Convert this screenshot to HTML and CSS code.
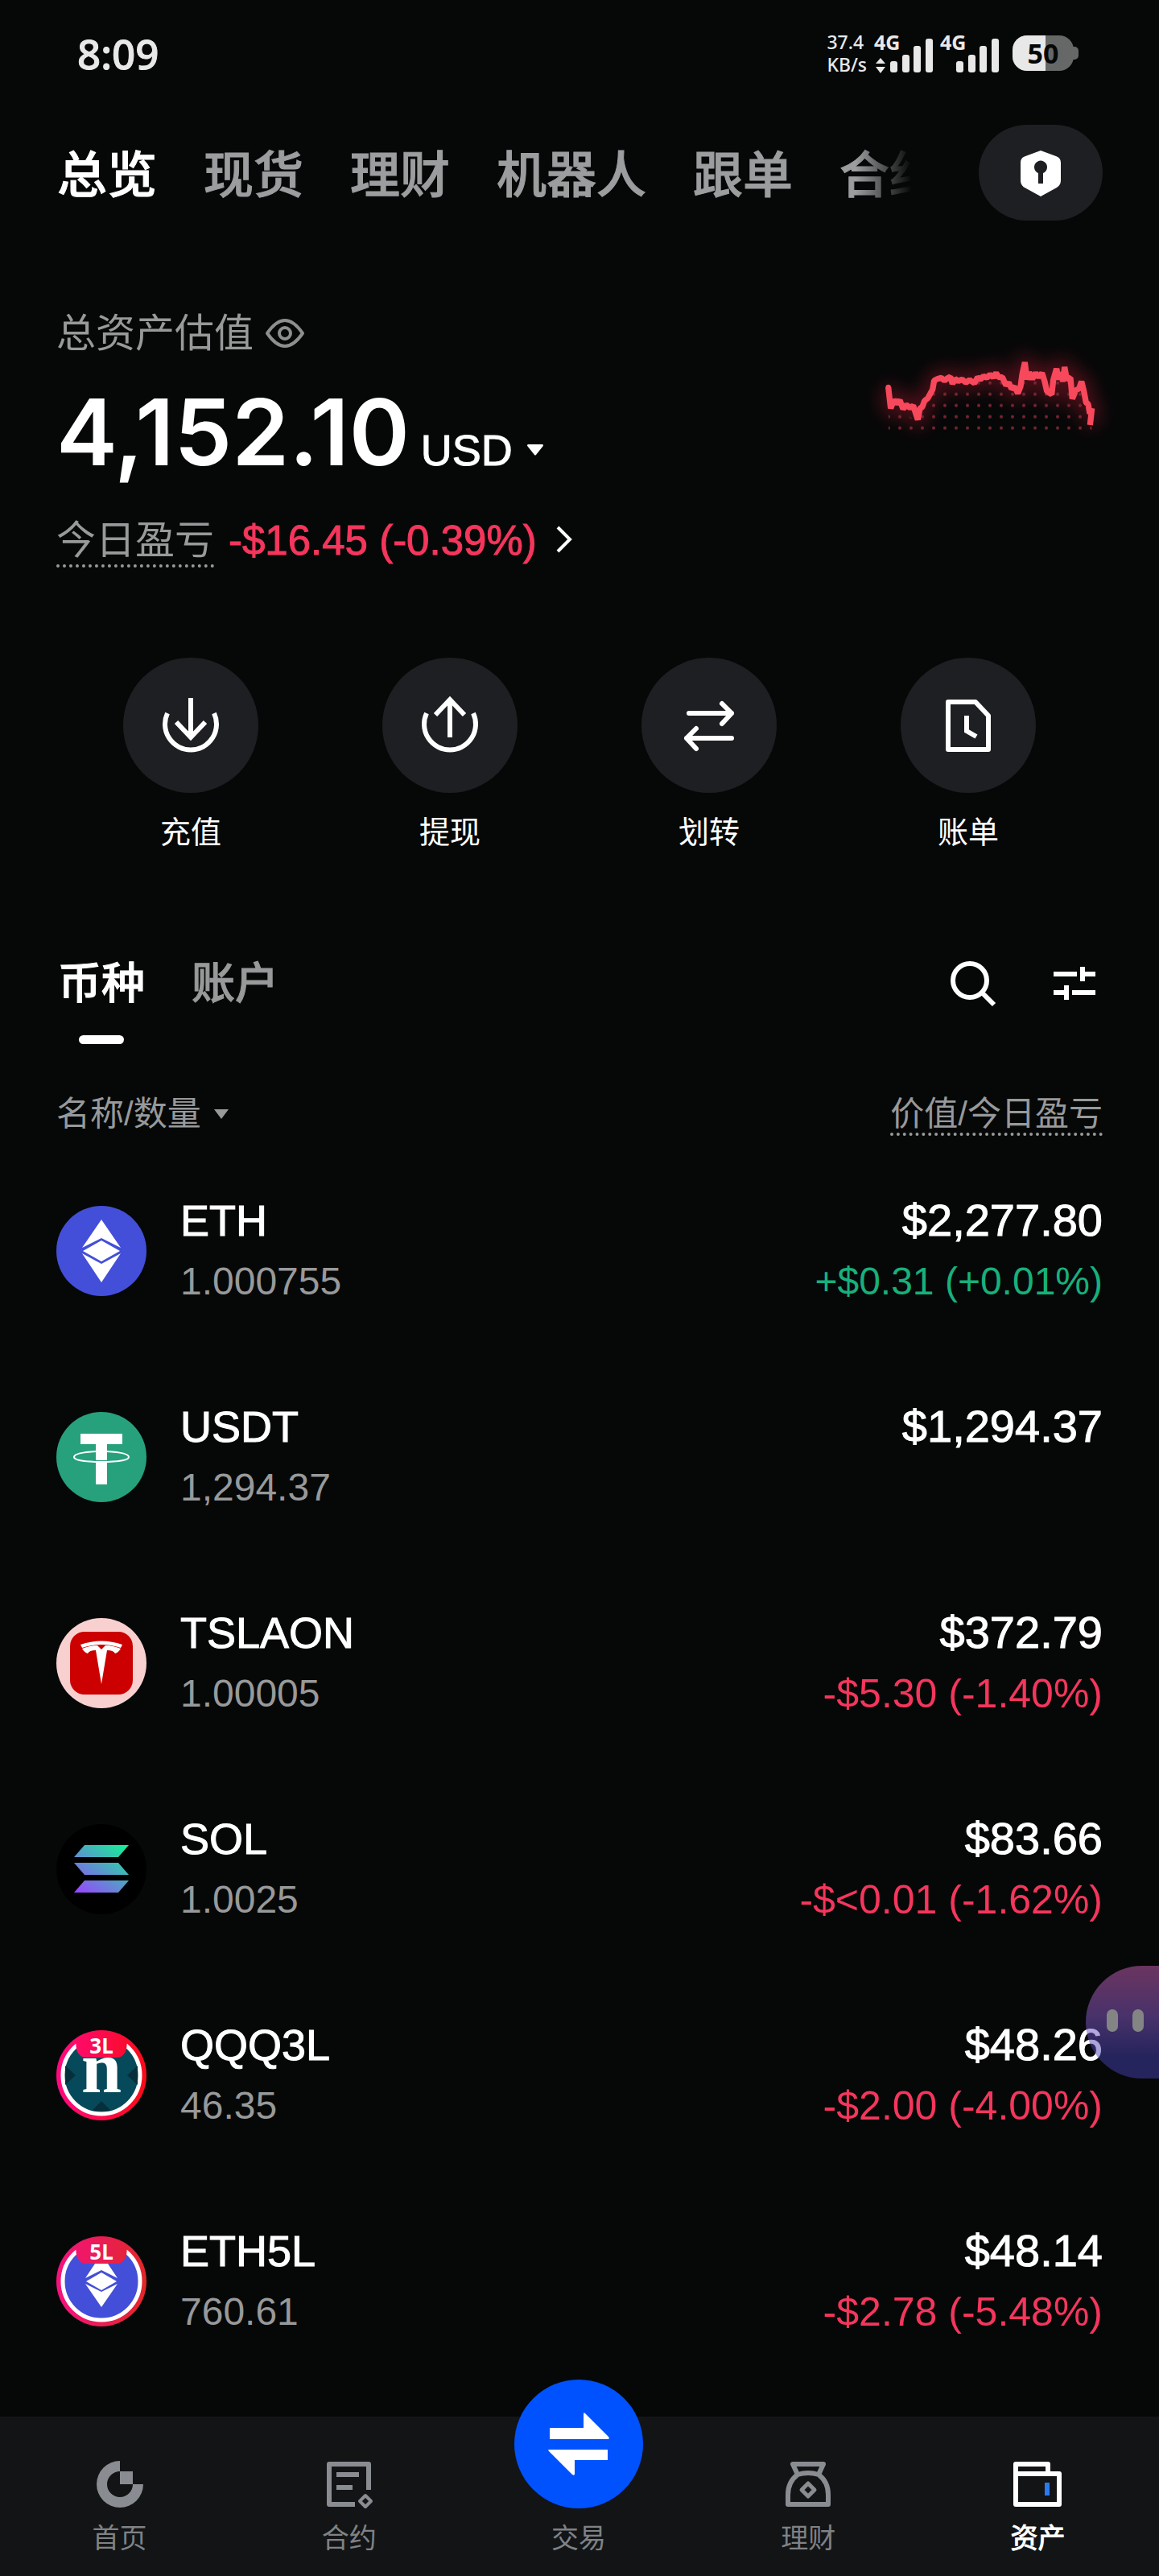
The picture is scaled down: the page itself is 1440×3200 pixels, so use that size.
FILE: index.html
```
<!DOCTYPE html>
<html lang="zh-CN">
<head>
    <meta charset="utf-8">
    <meta name="viewport" content="width=device-width, initial-scale=1">
    <title>资产总览</title>
    <link rel="stylesheet" href="styles.css">
</head>
<body>
    <div class="status">
        <span class="clock">8:09</span>
        <div class="status-right">
            <div class="speed"><span>37.4</span><span>KB/s</span></div>
            <svg class="signals" width="156" height="50" viewBox="0 0 156 50">
                <g fill="#e8e8e8">
                    <text x="0" y="21" class="net">4G</text>
                    <path d="M2 38L8 31L14 38zM2 42L8 50L14 42z"/>
                    <rect x="20" y="35" width="9" height="14" rx="3"/>
                    <rect x="35" y="27" width="9" height="22" rx="3"/>
                    <rect x="49" y="16" width="9" height="33" rx="3"/>
                    <rect x="64" y="7" width="9" height="42" rx="3"/>
                    <text x="82" y="21" class="net">4G</text>
                    <rect x="102" y="35" width="9" height="14" rx="3"/>
                    <rect x="117" y="27" width="9" height="22" rx="3"/>
                    <rect x="131" y="16" width="9" height="33" rx="3"/>
                    <rect x="146" y="7" width="9" height="42" rx="3"/>
                </g>
            </svg>
            <svg class="battery" width="82" height="44" viewBox="0 0 82 44">
                <path d="M74 14h3a5 5 0 0 1 5 5v6a5 5 0 0 1-5 5h-3z" fill="#666867"/>
                <rect width="76" height="44" rx="18" fill="#666867"/>
                <path d="M41 0H18A18 18 0 0 0 0 18v8a18 18 0 0 0 18 18h23z" fill="#e8e8e8"/>
                <text x="38" y="35" text-anchor="middle" class="level">50</text>
            </svg>
        </div>
    </div>

    <header class="top">
        <nav class="top-tabs">
            <a href="#" class="active">总览</a>
            <a href="#">现货</a>
            <a href="#">理财</a>
            <a href="#">机器人</a>
            <a href="#">跟单</a>
            <a href="#">合约</a>
        </nav>
        <button class="shield" aria-label="安全中心">
            <svg width="50" height="58" viewBox="0 0 50 58">
                <path d="M25 1L44 8Q50 10 50 16V38Q50 44 45 47L25 58L5 47Q0 44 0 38V16Q0 10 6 8z" fill="#fff"/>
                <path d="M22 42V29a8 8 0 1 1 6 0V42z" fill="#1e1f22"/>
            </svg>
        </button>
    </header>

    <main>
        <section class="summary">
            <div>
                <div class="label">总资产估值
                    <button aria-label="隐藏金额">
                        <svg width="48" height="36" viewBox="0 0 48 36" fill="none" stroke="#8d8e8f" stroke-width="4">
                            <path d="M2 18Q24-14 46 18Q24 50 2 18z" stroke-linejoin="round"/>
                            <circle cx="24" cy="18" r="7"/>
                        </svg>
                    </button>
                </div>
                <div class="total">
                    <strong>4,152.10</strong>
                    <button class="currency">USD
                        <svg width="20" height="14" viewBox="0 0 20 14"><path d="M1 0h18q2 1 0 3L11 13q-1 1-2 0L1 3q-2-2 0-3z" fill="#fff"/></svg>
                    </button>
                </div>
                <a href="#" class="today">
                    <span class="dotted">今日盈亏</span>
                    <span class="down">-$16.45 (-0.39%)</span>
                    <svg width="20" height="34" viewBox="0 0 20 34" fill="none" stroke="#fff" stroke-width="4"><path d="M2 2L17 17L2 32"/></svg>
                </a>
            </div>
            <svg class="trend" width="260" height="100" viewBox="180 120 780 300">
                <defs>
                    <pattern id="dots" x="171" y="206" width="42" height="42" patternUnits="userSpaceOnUse">
                        <circle cx="21" cy="21" r="6" fill="#7a2433"/>
                    </pattern>
                    <filter id="glow" x="-30%" y="-80%" width="160%" height="260%"><feGaussianBlur stdDeviation="34"/></filter>
                    <path id="line" d="M191 243L200 322L212 290L222 304L234 292L246 324L258 308L272 320L284 312L301 364L309 322L318 316L326 294L338 284L348 266L356 252L362 218L374 212L388 208L400 218L411 210L422 204L430 230L440 212L452 220L466 214L480 226L494 216L512 228L524 206L534 214L546 202L558 208L570 196L582 206L593 190L602 206L616 206L630 236L640 226L650 248L662 242L674 266L684 240L690 196L700 150L708 214L716 188L728 212L740 190L752 206L764 190L774 222L782 258L800 270L806 216L818 174L826 214L834 188L842 222L848 168L856 212L870 208L877 286L890 254L902 248L911 222L920 258L928 300L936 306L942 342L950 322L943 384"/>
                    <clipPath id="under"><path d="M191 300L300 372L362 250L440 236L600 212L674 272L700 212L764 212L798 280L818 222L866 212L878 286L911 244L950 380V410H191z"/></clipPath>
                </defs>
                <use href="#line" fill="none" stroke="#f5233f" stroke-width="60" stroke-linejoin="round" opacity=".3" filter="url(#glow)"/>
                <rect x="180" y="200" width="780" height="220" fill="url(#dots)" clip-path="url(#under)"/>
                <use href="#line" fill="none" stroke="#f7485c" stroke-width="22" stroke-linejoin="bevel"/>
                <circle cx="191" cy="243" r="10" fill="#f7485c"/>
            </svg>
        </section>

        <section class="actions">
            <button>
                <span class="disc"><svg width="84" height="84" viewBox="0 0 84 84"><path d="M42 8V54M24 38L42 57L60 38M13 27A32 32 0 1 0 71 27"/></svg></span>
                充值
            </button>
            <button>
                <span class="disc"><svg width="84" height="84" viewBox="0 0 84 84"><path d="M42 57V12M24 29L42 10L60 29M13 27A32 32 0 1 0 71 27"/></svg></span>
                提现
            </button>
            <button>
                <span class="disc"><svg width="84" height="84" viewBox="0 0 84 84" stroke-linecap="round" stroke-linejoin="round"><path d="M17 27H70M58 15L70 27L58 40M70 58H14M26 46L14 58L26 71"/></svg></span>
                划转
            </button>
            <button>
                <span class="disc"><svg width="84" height="84" viewBox="0 0 84 84" stroke-linejoin="round"><path d="M17 13H51L67 30V72H17z"/><path d="M40 30V49L52 56" stroke-linejoin="miter"/></svg></span>
                账单
            </button>
        </section>

        <div class="list-bar">
            <nav class="list-tabs">
                <a href="#" class="active">币种</a>
                <a href="#">账户</a>
            </nav>
            <div class="tools">
                <button aria-label="搜索"><svg width="56" height="60" viewBox="0 0 56 60"><circle cx="24" cy="28" r="21"/><path d="M39 43L54 58"/></svg></button>
                <button aria-label="筛选"><svg width="52" height="60" viewBox="0 0 52 60"><path d="M0 20H29M36 11V29M36 20H52M0 43H16M16 34V52M23 43H52"/></svg></button>
            </div>
        </div>

        <table class="assets">
            <thead>
                <tr>
                    <th colspan="2"><button>名称/数量
                        <svg width="18" height="12" viewBox="0 0 18 12"><path d="M0 0H18L9 12z" fill="#98999a"/></svg>
                    </button></th>
                    <th class="right"><span class="dotted">价值/今日盈亏</span></th>
                </tr>
            </thead>
            <tbody>
                <tr>
                    <td class="coin">
                        <svg width="112" height="112" viewBox="0 0 112 112">
                            <circle cx="56" cy="56" r="56" fill="#434fd8"/>
                            <path d="M56 17L80 52L56 40L32 52zM56 43L79 56L56 69L33 56zM32 59L56 72L80 59L56 95z" fill="#fff"/>
                        </svg>
                    </td>
                    <td><b>ETH</b><span>1.000755</span></td>
                    <td class="right"><b>$2,277.80</b><span class="up">+$0.31 (+0.01%)</span></td>
                </tr>
                <tr>
                    <td class="coin">
                        <svg width="112" height="112" viewBox="0 0 112 112">
                            <circle cx="56" cy="56" r="56" fill="#26a17b"/>
                            <path d="M30 27H82V40H63V60H49V40H30zM49 63H63V90H49z" fill="#fff"/>
                            <path d="M49 49C32 50 22 52 22 56S36 62 56 62S90 60 90 56S80 50 63 49" fill="none" stroke="#fff" stroke-width="2"/>
                        </svg>
                    </td>
                    <td><b>USDT</b><span>1,294.37</span></td>
                    <td class="right"><b>$1,294.37</b><span>&nbsp;</span></td>
                </tr>
                <tr>
                    <td class="coin">
                        <svg width="112" height="112" viewBox="0 0 112 112">
                            <circle cx="56" cy="56" r="56" fill="#f9d0d0"/>
                            <rect x="17" y="17" width="78" height="78" rx="18" fill="#cc0000"/>
                            <path d="M30 33Q56 24 82 33L80 37Q56 29 32 37z" fill="#fff"/>
                            <path d="M32 38Q42 34 51 34L56 39L61 34Q70 34 80 38Q77 43 73 44Q71 40 63 40L56 82L49 40Q41 40 39 44Q35 43 32 38z" fill="#fff"/>
                        </svg>
                    </td>
                    <td><b>TSLAON</b><span>1.00005</span></td>
                    <td class="right"><b>$372.79</b><span class="down">-$5.30 (-1.40%)</span></td>
                </tr>
                <tr>
                    <td class="coin">
                        <svg width="112" height="112" viewBox="0 0 112 112">
                            <linearGradient id="sol" gradientUnits="userSpaceOnUse" x1="32" y1="90" x2="80" y2="22"><stop stop-color="#9945ff"/><stop offset="1" stop-color="#14f195"/></linearGradient>
                            <circle cx="56" cy="56" r="56" fill="#000"/>
                            <path d="M35 26H90L77 41H22zM22 48H77L90 63H35zM35 70H90L77 85H22z" fill="url(#sol)"/>
                        </svg>
                    </td>
                    <td><b>SOL</b><span>1.0025</span></td>
                    <td class="right"><b>$83.66</b><span class="down">-$&lt;0.01 (-1.62%)</span></td>
                </tr>
                <tr>
                    <td class="coin">
                        <svg width="112" height="112" viewBox="0 0 112 112">
                            <linearGradient id="ring" gradientUnits="userSpaceOnUse" x1="0" x2="112"><stop stop-color="#ff0a80"/><stop offset="1" stop-color="#f80c18"/></linearGradient>
                            <circle cx="56" cy="56" r="56" fill="url(#ring)"/>
                            <circle cx="56" cy="56" r="48" fill="#06495a" stroke="#fff" stroke-width="5"/>
                            <path d="M11 44L24 56L11 68zM101 44L88 56L101 68zM44 100L56 88L68 100z" fill="#062f3b"/>
                            <text x="56" y="77" text-anchor="middle" class="mark">n</text>
                            <path d="M24 14L40 3H72L88 14L87 24Q84 34 74 34H38Q28 34 25 24z" fill="url(#ring)"/>
                            <text x="56" y="29" text-anchor="middle" class="lever">3L</text>
                        </svg>
                    </td>
                    <td><b>QQQ3L</b><span>46.35</span></td>
                    <td class="right"><b>$48.26</b><span class="down">-$2.00 (-4.00%)</span></td>
                </tr>
                <tr>
                    <td class="coin">
                        <svg width="112" height="112" viewBox="0 0 112 112">
                            <linearGradient id="ring5" gradientUnits="userSpaceOnUse" x1="0" x2="112"><stop stop-color="#f5127f"/><stop offset="1" stop-color="#e02828"/></linearGradient>
                            <circle cx="56" cy="56" r="56" fill="url(#ring5)"/>
                            <circle cx="56" cy="56" r="48" fill="#434fd8" stroke="#fff" stroke-width="5"/>
                            <path d="M56 22L76 52L56 42L36 52zM56 45L75 56L56 67L37 56zM36 59L56 69L76 59L56 88z" fill="#fff"/>
                            <path d="M24 14L40 3H72L88 14L87 24Q84 34 74 34H38Q28 34 25 24z" fill="url(#ring5)"/>
                            <text x="56" y="29" text-anchor="middle" class="lever">5L</text>
                        </svg>
                    </td>
                    <td><b>ETH5L</b><span>760.61</span></td>
                    <td class="right"><b>$48.14</b><span class="down">-$2.78 (-5.48%)</span></td>
                </tr>
            </tbody>
        </table>
    </main>

    <!-- floating assistant, half tucked behind the right edge -->
    <button class="assistant" aria-label="助手"><i></i><i></i></button>

    <nav class="bottom">
        <a href="#">
            <svg width="60" height="60" viewBox="0 0 60 60"><path d="M30 1V14A16 16 0 1 0 46 30H59A29 29 0 1 1 30 1zM30 14H46V30H30z" fill="#898c90"/></svg>
            首页
        </a>
        <a href="#">
            <svg width="60" height="60" viewBox="0 0 60 60" fill="none" stroke="#898c90" stroke-width="6" stroke-linejoin="round"><path d="M54 37V5H5V55H37M14 18H42M14 34H34"/><path d="M50 44L57 51L50 58L43 51z" stroke-width="4"/></svg>
            合约
        </a>
        <a href="#" class="trade">
            <span><svg width="76" height="80" viewBox="0 0 76 80" fill="#fff"><path d="M2 20H44V3Q44 0 46 2L75 31Q77 34 74 34H2zM0 47H74V60H33V77Q33 80 30 78L1 49z"/></svg></span>
            交易
        </a>
        <a href="#">
            <svg width="60" height="60" viewBox="0 0 60 60" fill="none" stroke="#898c90" stroke-width="6" stroke-linejoin="round"><path d="M17 18L11 5H49L43 18M17 18Q30 14 43 18Q55 27 55 43V55H5V43Q5 27 17 18z"/><path d="M30 29L38 37L30 45L22 37z" stroke-width="5"/></svg>
            理财
        </a>
        <a href="#" class="active">
            <svg width="60" height="60" viewBox="0 0 60 60" fill="none" stroke="#fff" stroke-width="6" stroke-linejoin="round"><path d="M3 17H57V55H3V5H43V17"/><path d="M42 28V44" stroke="#2a7bf0"/></svg>
            资产
        </a>
    </nav>
</body>
</html>
```
FILE: styles.css
```
* { margin: 0; padding: 0; box-sizing: border-box; }

body {
    display: flex;
    flex-direction: column;
    min-height: 100vh;
    position: relative;
    overflow-x: hidden;
    background: #060808;
    color: #fff;
    font-family: "Liberation Sans", "Noto Sans CJK SC", sans-serif;
}

a { color: inherit; text-decoration: none; }
button { border: 0; background: none; color: inherit; font: inherit; cursor: pointer; }
svg { display: block; flex: none; overflow: visible; }

/* status bar */
.status {
    display: flex;
    align-items: center;
    justify-content: space-between;
    height: 132px;
    padding: 0 100px 0 96px;
    color: #e8e8e8;
    font-family: "Noto Sans", sans-serif;
}
.clock { font-size: 51px; font-weight: 500; -webkit-text-stroke: 1px; }
.status-right { display: flex; align-items: center; }
.speed {
    display: flex;
    flex-direction: column;
    margin-right: 9px;
    font-size: 23px;
    line-height: 28px;
    font-weight: 500;
}
.signals { margin-right: 16px; }
.net { font-size: 25px; font-weight: 700; }
.level { font-size: 34px; font-weight: 700; fill: #060808; }

/* top tabs */
.top {
    display: flex;
    align-items: center;
    justify-content: space-between;
    margin-top: 23px;
    padding: 0 70px 0 71px;
}
.top-tabs {
    display: flex;
    flex: 1;
    gap: 58px;
    margin-right: 83px;
    padding-top: 8px;
    overflow: hidden;
    white-space: nowrap;
    font-size: 62px;
    line-height: 90px;
    font-weight: 500;
    color: #9b9d9f;
    -webkit-text-stroke: 1px;
    -webkit-mask-image: linear-gradient(to left, transparent, #000 70px);
    mask-image: linear-gradient(to left, transparent, #000 70px);
}
.top-tabs a { flex: none; }
.active { color: #fff; }
.shield {
    display: flex;
    align-items: center;
    justify-content: center;
    width: 154px;
    height: 119px;
    border-radius: 60px;
    background: #1e1f22;
}

/* balance */
.summary {
    display: flex;
    justify-content: space-between;
    align-items: flex-start;
    margin-top: 110px;
    padding: 0 80px 0 70px;
}
.label {
    display: flex;
    align-items: center;
    gap: 15px;
    font-size: 49px;
    line-height: 60px;
    color: #98999a;
}
.total {
    display: flex;
    align-items: baseline;
    gap: 14px;
    margin-top: 37px;
    line-height: 112px;
}
.total strong { font-family: Inter, sans-serif; font-size: 114px; font-weight: 600; }
.currency {
    display: flex;
    align-items: center;
    gap: 18px;
    font-size: 54px;
    line-height: 60px;
    -webkit-text-stroke: 1px;
}
.today {
    display: flex;
    align-items: flex-start;
    gap: 18px;
    margin-top: 49px;
    font-size: 49px;
    line-height: 59px;
}
.today svg { margin: 11px 0 0 6px; }
.today .down { font-size: 51px; -webkit-text-stroke: 1px; }
.dotted { color: #98999a; border-bottom: 4px dotted #98999a; }
.down { color: #f5365c; }
.up { color: #18b07b; }
.trend { margin-top: 56px; }

/* round shortcuts */
.actions {
    display: grid;
    grid-template-columns: repeat(4, 1fr);
    margin-top: 112px;
    padding: 0 76px;
}
.actions button {
    display: flex;
    flex-direction: column;
    align-items: center;
    gap: 24px;
    font-size: 38px;
    line-height: 50px;
}
.disc {
    display: flex;
    align-items: center;
    justify-content: center;
    width: 168px;
    height: 168px;
    border-radius: 50%;
    background: #1e1f22;
}
.disc svg, .tools svg { fill: none; stroke: #fff; stroke-width: 6; }

/* list */
.list-bar {
    display: flex;
    justify-content: space-between;
    margin-top: 131px;
    padding: 0 79px 0 72px;
}
.list-tabs {
    display: flex;
    gap: 58px;
    font-size: 54px;
    line-height: 64px;
    font-weight: 500;
    color: #98999a;
    -webkit-text-stroke: 1px;
}
.list-tabs .active { color: #fff; }
.list-tabs .active::after {
    content: "";
    display: block;
    width: 56px;
    height: 11px;
    margin: 32px auto 0;
    border-radius: 6px;
    background: #fff;
}
.tools { display: flex; align-items: flex-start; gap: 72px; }

.assets {
    width: 100%;
    margin-top: 42px;
    border-collapse: collapse;
}
.assets th {
    height: 87px;
    padding: 22px 70px 0;
    vertical-align: top;
    text-align: left;
    font-size: 42px;
    line-height: 46px;
    font-weight: 400;
    color: #98999a;
}
.assets th button { display: flex; align-items: center; gap: 16px; }
.assets th .dotted { display: inline-block; }
.assets td { height: 256px; vertical-align: middle; }
.assets .right { padding-right: 70px; text-align: right; }
.coin { width: 224px; padding-left: 70px; }
.assets b, .assets td span { display: block; line-height: 76px; }
.assets b { font-size: 54px; font-weight: 400; -webkit-text-stroke: 1px; }
.assets .right b { font-size: 56px; }
.assets td span { font-size: 48px; color: #98999a; }
.assets td .up { color: #18b07b; }
.assets td .down { font-size: 50px; color: #f5365c; }
.mark { font: 700 90px "Liberation Serif", serif; fill: #fff; }
.lever { font: 700 26px "Noto Sans", sans-serif; fill: #fff; }

.assistant {
    position: absolute;
    top: 2442px;
    right: 0;
    display: flex;
    gap: 18px;
    width: 91px;
    height: 140px;
    padding: 54px 0 0 26px;
    border-radius: 70px 0 0 70px;
    background: linear-gradient(#cf62b8, #8a5ccc 45%, #4640b0 80%);
    opacity: .5;
}
.assistant i {
    width: 14px;
    height: 28px;
    border-radius: 7px;
    background: #fff;
}

/* bottom navigation */
.bottom {
    display: grid;
    grid-template-columns: repeat(5, 1fr);
    height: 198px;
    margin-top: auto;
    padding: 54px 8px 0 6px;
    background: #131416;
    font-size: 34px;
    line-height: 40px;
    color: #7f8285;
}
.bottom a {
    display: flex;
    flex-direction: column;
    align-items: center;
    gap: 17px;
}
.bottom .active { color: #fff; -webkit-text-stroke: 1px; }
.trade span {
    display: flex;
    align-items: center;
    justify-content: center;
    width: 160px;
    height: 160px;
    margin-top: -100px;
    border-radius: 50%;
    background: #0052ff;
}
```
